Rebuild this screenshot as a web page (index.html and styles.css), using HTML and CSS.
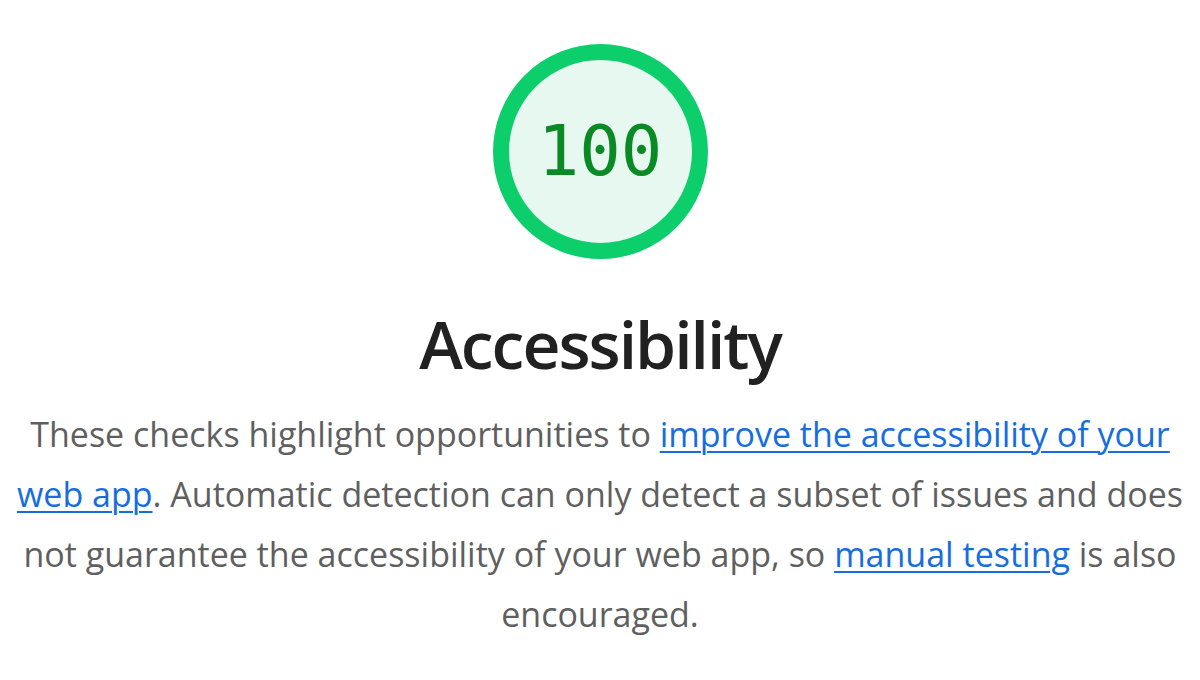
FILE: index.html
```html
<!DOCTYPE html>
<html lang="en">
<head>
<meta charset="utf-8">
<title>Accessibility</title>
<link rel="stylesheet" href="styles.css">
</head>
<body>
<div class="category">
  <div class="gauge-wrap">
    <div class="gauge"><span class="score">100</span></div>
  </div>
  <h2 class="title">Accessibility</h2>
  <p class="desc">These checks highlight opportunities to <a href="#">improve the accessibility of your web app</a>. Automatic detection can only detect a subset of issues and does not guarantee the accessibility of your web app, so <a href="#">manual testing</a> is also encouraged.</p>
</div>
</body>
</html>
```
FILE: styles.css
```css
html, body {
  margin: 0;
  padding: 0;
  background: #ffffff;
}
.category {
  display: flex;
  flex-direction: column;
  align-items: center;
  padding: 44px 10px 0;
  font-family: "Open Sans", "Noto Sans", sans-serif;
}
.gauge-wrap {
  display: flex;
  justify-content: center;
}
.gauge {
  box-sizing: border-box;
  width: 215px;
  height: 215px;
  border-radius: 50%;
  border: 16px solid #0cce6b;
  background: #e6f8ef;
  display: flex;
  align-items: center;
  justify-content: center;
}
.score {
  font-family: "DejaVu Sans Mono", "Liberation Mono", monospace;
  font-size: 69px;
  color: #0a8a24;
  line-height: 1;
}
.title {
  margin: 42px 0 0;
  font-size: 66px;
  line-height: 84px;
  font-weight: 600;
  letter-spacing: -2px;
  color: #212121;
  text-align: center;
}
.desc {
  margin: 19px 0 0;
  font-size: 34px;
  line-height: 60px;
  color: #5f5f5f;
  text-align: center;
}
.desc a {
  color: #166de0;
  text-decoration: underline;
  text-decoration-thickness: 2px;
  text-underline-offset: 4px;
}
```
